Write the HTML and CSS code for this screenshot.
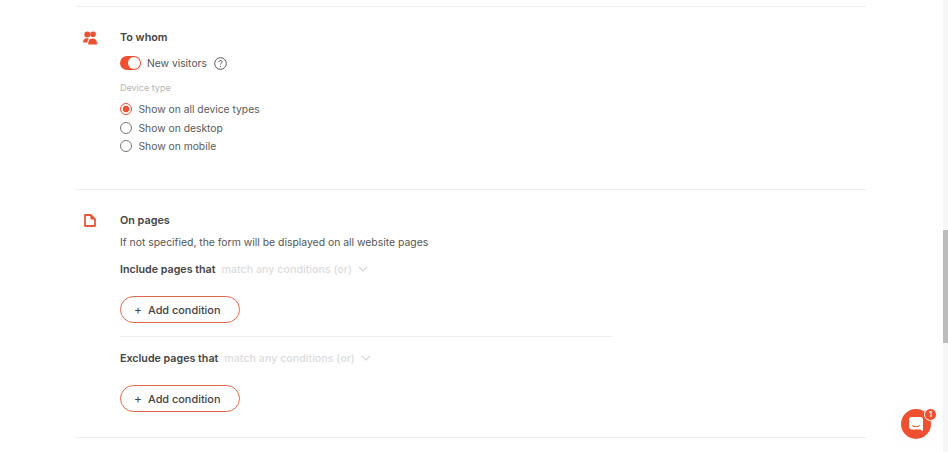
FILE: index.html
```html
<!DOCTYPE html>
<html lang="en">
<head>
<meta charset="utf-8">
<title>Form targeting</title>
<link rel="stylesheet" href="styles.css">
</head>
<body>
<div class="page">
  <main class="content">
    <section class="section section-whom">
      <div class="icon-col">
        <svg class="sec-icon" width="14" height="14" viewBox="0 0 14 14"><circle cx="4.300" cy="3.400" r="3" fill="#ee5132"/><circle cx="10" cy="3.300" r="2.800" fill="#ee5132"/><path d="M0 11.500C0 8.900 1.500 7.300 3.900 7.300c.8 0 1.500.2 2.100.5-1 .9-1.600 2.200-1.700 3.700z" fill="#ee5132"/><path d="M5.200 13.500v-1.200c0-2.800 1.900-4.700 4.400-4.700s4.400 1.900 4.400 4.700v1.200z" fill="#ee5132"/></svg>
      </div>
      <div class="body">
        <h2 class="title">To whom</h2>
        <div class="toggle-row">
          <span class="toggle"><span class="knob"></span></span>
          <span class="toggle-label">New visitors</span>
          <svg class="help" width="13" height="13" viewBox="0 0 13 13"><circle cx="6.500" cy="6.500" r="5.800" fill="none" stroke="#555" stroke-width="1"/><path d="M4.900 5.100c0-1 .7-1.600 1.600-1.600s1.600.6 1.600 1.400c0 1.200-1.600 1.200-1.600 2.500" fill="none" stroke="#555" stroke-width="1"/><circle cx="6.500" cy="9.300" r=".65" fill="#555"/></svg>
        </div>
        <div class="field-label">Device type</div>
        <ul class="radios">
          <li class="radio-row"><span class="radio radio-on"></span>Show on all device types</li>
          <li class="radio-row"><span class="radio"></span>Show on desktop</li>
          <li class="radio-row"><span class="radio"></span>Show on mobile</li>
        </ul>
      </div>
    </section>
    <section class="section section-pages">
      <div class="icon-col">
        <svg class="sec-icon" width="12" height="13" viewBox="0 0 12 13"><path d="M1 1h5.800L11 5.200V12H1z" fill="#fff" stroke="#e9583b" stroke-width="1.800" stroke-linejoin="round"/><path d="M6.500 0.500L11.500 5.500H6.500z" fill="#ee5132"/></svg>
      </div>
      <div class="body">
        <h2 class="title">On pages</h2>
        <p class="hint">If not specified, the form will be displayed on all website pages</p>
        <div class="rule-block rule-include">
          <div class="rule-head">
            <strong>Include pages that</strong>
            <span class="match">match any conditions (or)</span>
            <svg class="chev" width="10" height="6" viewBox="0 0 10 6"><path d="M1 1l4 4 4-4" fill="none" stroke="#d4d4d4" stroke-width="1.100"/></svg>
          </div>
          <button class="add" type="button"><span class="plus">+</span>Add condition</button>
        </div>
        <div class="rule-block rule-exclude">
          <div class="rule-head">
            <strong>Exclude pages that</strong>
            <span class="match">match any conditions (or)</span>
            <svg class="chev" width="10" height="6" viewBox="0 0 10 6"><path d="M1 1l4 4 4-4" fill="none" stroke="#d4d4d4" stroke-width="1.100"/></svg>
          </div>
          <button class="add" type="button"><span class="plus">+</span>Add condition</button>
        </div>
      </div>
    </section>
  </main>
  <div class="scrollbar"><div class="thumb"></div></div>
</div>
<div class="chat">
  <svg width="14" height="14" viewBox="0 0 14 14"><path d="M2.500 0h9A2.500 2.500 0 0 1 14 2.500V14l-3-1.600H2.500A2.500 2.500 0 0 1 0 10V2.500A2.500 2.500 0 0 1 2.500 0z" fill="#fff"/><path d="M3 8.600c2.400 1.500 5.600 1.500 8 0" fill="none" stroke="#ee5132" stroke-width="1"/></svg>
  <span class="badge">1</span>
</div>
</body>
</html>
```
FILE: styles.css
```css
* { box-sizing: border-box; }
html, body { margin: 0; height: 100%; overflow: hidden; }
body { background: #fff; font-family: Inter, "Liberation Sans", sans-serif; color: #4a4a4a; font-size: 11px; }
.page { display: flex; height: 452px; }
.content { flex: 1; padding: 6px 77px 0 76px; }
.section { display: flex; border-top: 1px solid #eeeeee; }
.section-whom { height: 183px; padding-top: 24px; }
.section-pages { height: 249px; padding-top: 24px; border-bottom: 1px solid #eeeeee; }
.icon-col { width: 44px; flex: none; padding-left: 7px; }
.sec-icon { display: block; }
.section-pages .sec-icon { margin-left: 1px; }
.body { width: 492px; }
.title { margin: 0; font-size: 10.800px; line-height: 14px; font-weight: 600; color: #444; }
.toggle-row { display: flex; align-items: center; height: 16px; margin-top: 10px; }
.toggle { width: 21px; height: 14px; border-radius: 7px; background: #ee5132; position: relative; flex: none; }
.knob { position: absolute; right: 1px; top: 1px; width: 12px; height: 12px; border-radius: 50%; background: #fff; }
.toggle-label { margin-left: 6px; font-size: 10.300px; color: #555; }
.help { margin-left: 7px; }
.field-label { margin-top: 11px; font-size: 9px; line-height: 12px; color: #b5b5b5; }
.radios { list-style: none; margin: 6px 0 0; padding: 0; }
.radio-row { display: flex; align-items: center; height: 18.500px; font-size: 10.300px; color: #5a5a5a; }
.radio { width: 12px; height: 12px; border-radius: 50%; border: 1px solid #777; margin-right: 6.500px; flex: none; background: #fff; }
.radio-on { border-color: #ee5132; background: radial-gradient(circle, #ee5132 0 3px, #fff 3.600px); }
.hint { margin: 8px 0 0; font-size: 10.400px; line-height: 14px; color: #555; }
.rule-head { display: flex; align-items: center; height: 14px; }
.rule-head strong { font-size: 10.700px; font-weight: 600; color: #444; }
.match { margin-left: 6px; font-weight: 500; font-size: 10.700px; color: #dcdcdc; }
.chev { margin-left: 6px; }
.rule-include { margin-top: 12px; height: 74px; }
.rule-exclude { border-top: 1px solid #eeeeee; padding-top: 14px; }
.add { display: flex; align-items: center; width: 120px; height: 27px; margin-top: 20px; padding: 0 0 0 13px; border: 1px solid #e4674c; border-radius: 14px; background: #fff; font: 500 10.900px Inter, "Liberation Sans", sans-serif; color: #444; }
.plus { width: 14px; font-size: 12px; font-weight: 400; line-height: 1; text-align: left; }
.scrollbar { width: 5px; height: 452px; background: #f6f6f6; flex: none; }
.thumb { margin-top: 230px; height: 113px; background: #bcbcbc; }
.chat { position: fixed; left: 901px; top: 409px; width: 30px; height: 30px; border-radius: 50%; background: #ee5132; display: flex; align-items: center; justify-content: center; box-shadow: 0 0 30px rgba(0,0,0,.03); }
.badge { position: absolute; right: -6px; top: -1px; width: 11px; height: 11px; border-radius: 50%; background: #ee5132; border: 1px solid #fff; box-sizing: content-box; color: #fff; font-size: 7px; font-weight: 700; line-height: 11px; text-align: center; }
```
